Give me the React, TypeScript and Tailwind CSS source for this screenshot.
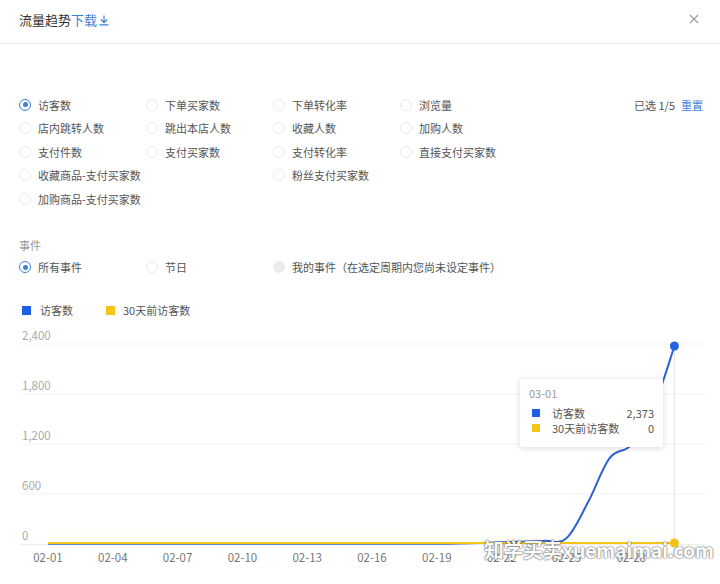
import React from "react";

const FONT = { fontFamily: '"Noto Sans CJK SC", "Noto Sans", sans-serif' };

const rows: (string | null)[][] = [
  ["访客数", "下单买家数", "下单转化率", "浏览量"],
  ["店内跳转人数", "跳出本店人数", "收藏人数", "加购人数"],
  ["支付件数", "支付买家数", "支付转化率", "直接支付买家数"],
  ["收藏商品-支付买家数", null, "粉丝支付买家数", null],
  ["加购商品-支付买家数", null, null, null],
];

function Radio({ checked, disabled }: { checked?: boolean; disabled?: boolean }) {
  if (disabled) return <span className="w-3 h-3 rounded-full bg-[#ececec] shrink-0" />;
  return (
    <span
      className={
        "w-3 h-3 rounded-full border shrink-0 flex items-center justify-center " +
        (checked ? "border-[#3d7fd9]" : "border-[#ebebeb]")
      }
    >
      {checked && <span className="w-[5px] h-[5px] rounded-full bg-[#3d7fd9]" />}
    </span>
  );
}

function Option({ label, checked, disabled }: { label: string; checked?: boolean; disabled?: boolean }) {
  return (
    <div className="flex items-center gap-[7px] whitespace-nowrap">
      <Radio checked={checked} disabled={disabled} />
      <span className="text-[11px] text-[#555]">{label}</span>
    </div>
  );
}

// catmull-rom -> cubic bezier
function smoothPath(pts: [number, number][]) {
  let d = `M${pts[0][0]},${pts[0][1]}`;
  for (let i = 0; i < pts.length - 1; i++) {
    const p0 = pts[i - 1] || pts[i];
    const p1 = pts[i];
    const p2 = pts[i + 1];
    const p3 = pts[i + 2] || p2;
    const t = 0.18;
    const c1x = p1[0] + (p2[0] - p0[0]) * t;
    const c1y = p1[1] + (p2[1] - p0[1]) * t;
    const c2x = p2[0] - (p3[0] - p1[0]) * t;
    const c2y = p2[1] - (p3[1] - p1[1]) * t;
    d += ` C${c1x},${c1y} ${c2x},${c2y} ${p2[0]},${p2[1]}`;
  }
  return d;
}

const xOf = (i: number) => 48 + 21.6 * i;
const yOf = (v: number) => 543 - (v * 200) / 2400;

const blue = [
  2, 2, 2, 2, 2, 2, 2, 2, 2, 2, 2, 2, 2, 2, 2, 2, 2, 2, 2, 5, 12, 20, 28, 38, 70, 500, 1030, 1190, 1620, 2373,
];

function Chart() {
  const bluePts = blue.map((v, i) => [xOf(i), yOf(v)] as [number, number]);
  const dates = ["02-01", "02-04", "02-07", "02-10", "02-13", "02-16", "02-19", "02-22", "02-25", "02-28"];
  return (
    <div className="relative">
      <svg width="720" height="259" viewBox="0 325 720 259" className="block">
        {[343, 393, 443, 493].map((y) => (
          <line key={y} x1="20" x2="705" y1={y} y2={y} stroke="#f3f3f3" strokeWidth="1" />
        ))}
        <rect x="48" y="529" width="626" height="13" fill="#fffef8" />
        <line x1="20" x2="705" y1="543.5" y2="543.5" stroke="#eeeeee" strokeWidth="1" />
        {[
          ["2,400", 339],
          ["1,800", 389],
          ["1,200", 439],
          ["600", 489],
          ["0", 539],
        ].map(([t, y]) => (
          <text key={t} x="22" y={y} fontSize="11.5" fill="#aaa" style={FONT}>
            {t}
          </text>
        ))}
        {dates.map((d, k) => (
          <text key={d} x={xOf(k * 3)} y="561" fontSize="11.5" fill="#777" textAnchor="middle" style={FONT}>
            {d}
          </text>
        ))}
        <line x1="674.4" x2="674.4" y1="343" y2="543" stroke="#e6e6e6" strokeWidth="1" />
        <path d={smoothPath(bluePts)} fill="none" stroke="#2b63d6" strokeWidth="2" />
        <line x1="48" x2="674.4" y1="542" y2="542" stroke="#f2c318" strokeWidth="2" />
        <circle cx="674.4" cy="345" r="4.5" fill="#2563e0" />
        <circle cx="674.4" cy="542" r="4.5" fill="#f2c318" />
      </svg>

      <div className="absolute left-[520px] top-[53px] w-[143px] h-[68px] bg-white shadow-[0_1px_6px_rgba(0,0,0,0.15)] px-[9px] pt-[6px] text-[11px]">
        <div className="text-[#999] leading-[16px]">03-01</div>
        <div className="mt-[5px] flex items-center h-[15px]">
          <span className="w-2 h-2 bg-[#1f5fe6] ml-[3px]" />
          <span className="ml-[12px] text-[#555]">访客数</span>
          <span className="ml-auto text-[#555]">2,373</span>
        </div>
        <div className="flex items-center h-[15px]">
          <span className="w-2 h-2 bg-[#f5c518] ml-[3px]" />
          <span className="ml-[12px] text-[#555]">30天前访客数</span>
          <span className="ml-auto text-[#555]">0</span>
        </div>
      </div>

      <div className="absolute left-[484px] top-[211px] text-[20px] leading-[26px] font-bold text-white tracking-[-0.5px] [text-shadow:0_0_2px_#444,0_0_1px_#444] whitespace-nowrap opacity-90">
        知学买卖xuemaimai.com
      </div>
    </div>
  );
}

export default function App() {
  return (
    <div className="w-[720px] h-[584px] bg-white overflow-hidden" style={FONT}>
      <div className="h-[44px] border-b border-[#ececec] flex items-center px-[19px] justify-between">
        <div className="flex items-center text-[13px] text-[#333] -mt-[4px]">
          <span>流量趋势</span>
          <span className="text-[#3d7fd9]">下载</span>
          <svg width="12" height="12" viewBox="0 0 12 12" className="ml-[1px]">
            <path d="M6 1.5v7M2.8 5.5L6 8.6 9.2 5.5M1.5 10.8h9" fill="none" stroke="#3d7fd9" strokeWidth="1.2" />
          </svg>
        </div>
        <svg width="10" height="10" viewBox="0 0 10 10" className="-mt-[6px] mr-[2px]">
          <path d="M1 1L9 9M9 1L1 9" stroke="#999" strokeWidth="1.1" />
        </svg>
      </div>

      <div className="px-[19px] mt-[49px] relative">
        <div className="absolute right-[17px] top-0 h-[23.5px] flex items-center text-[11px] whitespace-nowrap">
          <span className="text-[#555]">已选 1/5</span>
          <span className="text-[#3d7fd9] ml-[6px]">重置</span>
        </div>
        {rows.map((r, ri) => (
          <div key={ri} className="grid grid-cols-[127px_127px_127px_127px] h-[23.5px] items-center">
            {r.map((l, ci) => (l ? <Option key={ci} label={l} checked={ri === 0 && ci === 0} /> : <div key={ci} />))}
          </div>
        ))}

        <div className="mt-[26px] text-[11px] text-[#999] leading-[16px]">事件</div>
        <div className="grid grid-cols-[127px_127px_300px] h-[23px] items-center mt-[3px]">
          <Option label="所有事件" checked />
          <Option label="节日" />
          <Option label="我的事件（在选定周期内您尚未设定事件）" disabled />
        </div>

        <div className="flex items-center mt-[24px] h-[16px] text-[11px] text-[#555]">
          <span className="w-[9px] h-[9px] bg-[#1f5fe6] ml-[3px]" />
          <span className="ml-[9px]">访客数</span>
          <span className="w-[9px] h-[9px] bg-[#f5c518] ml-[33px]" />
          <span className="ml-[8px]">30天前访客数</span>
        </div>
      </div>

      <div className="mt-[7px]">
        <Chart />
      </div>
    </div>
  );
}
